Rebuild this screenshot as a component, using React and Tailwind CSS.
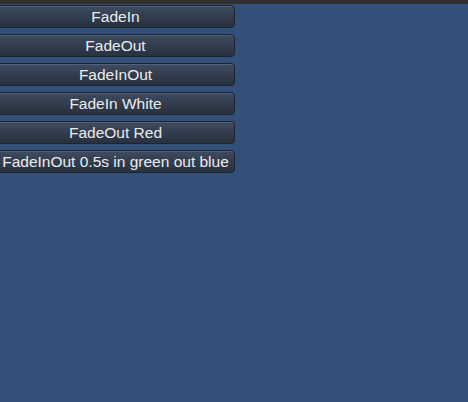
const labels = [
  'FadeIn',
  'FadeOut',
  'FadeInOut',
  'FadeIn White',
  'FadeOut Red',
  'FadeInOut 0.5s in green out blue',
];

const App = () => {
  return (
    <div className="w-[468px] h-[402px] bg-[#325079] flex flex-col overflow-hidden" style={{ fontFamily: '"Liberation Sans", Arial, sans-serif' }}>
      <div className="h-[4px] bg-[#2f2f2f] shrink-0" />
      <div className="flex flex-col gap-[6px] pt-[1px] -ml-[4px]">
        {labels.map((label) => (
          <button
            key={label}
            className="w-[239px] h-[23px] rounded-[4px] border border-[#1c2430] bg-gradient-to-b from-[#3f4c60] via-[#323d4e] to-[#28313e] shadow-[inset_0_1px_0_rgba(140,160,190,0.25)] text-[#ececec] text-[15.5px] leading-none flex items-center justify-center pt-[1px] whitespace-nowrap"
          >
            {label}
          </button>
        ))}
      </div>
    </div>
  );
};

export default App;
